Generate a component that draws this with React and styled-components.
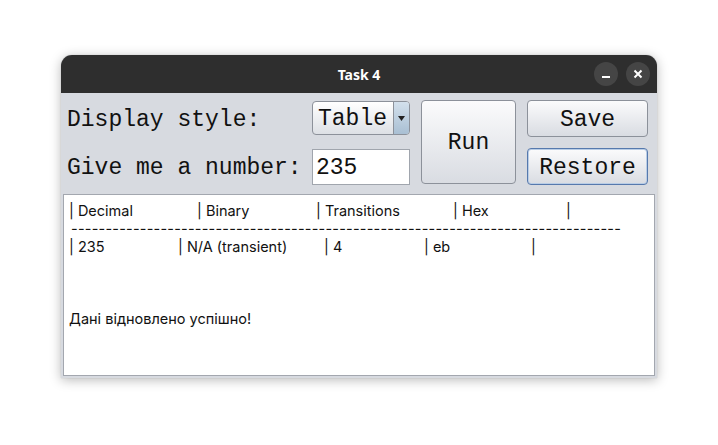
import React from 'react';
import styled, { createGlobalStyle } from 'styled-components';

const Global = createGlobalStyle`
  html, body { margin: 0; padding: 0; background: #ffffff; }
  body { width: 718px; height: 445px; overflow: hidden; }
`;

const Page = styled.div`
  padding: 55px 0 0 61px;
`;

const Window = styled.div`
  width: 596px;
  height: 323px;
  display: flex;
  flex-direction: column;
  background: #d7dae0;
  border-radius: 11px 11px 0 0;
  box-shadow: 0 2px 12px rgba(0, 0, 0, 0.28), 0 0 1px rgba(0, 0, 0, 0.3);
  overflow: hidden;
`;

const TitleBar = styled.div`
  height: 38px;
  flex: none;
  background: #2e2e2e;
  position: relative;
  display: flex;
  align-items: center;
  justify-content: center;
  color: #ffffff;
  font-family: "Noto Sans", "DejaVu Sans", sans-serif;
  font-weight: 700;
  font-size: 14px;
`;

const TitleButtons = styled.div`
  position: absolute;
  right: 7px;
  top: 7px;
  display: flex;
  gap: 8px;
`;

const RoundButton = styled.div`
  width: 24px;
  height: 24px;
  border-radius: 50%;
  background: #454545;
  display: flex;
  align-items: center;
  justify-content: center;
`;

const Controls = styled.div`
  display: grid;
  grid-template-columns: 234px 98px 95px 121px;
  grid-template-rows: 36px 36px;
  column-gap: 11px;
  row-gap: 12px;
  padding: 7px 0 0 6px;
  font-family: "Liberation Mono", "DejaVu Sans Mono", monospace;
  font-size: 23px;
  color: #111;
`;

const Label = styled.div`
  display: flex;
  align-items: center;
  white-space: nowrap;
  padding-top: ${p => p.$shift || 0}px;
`;

const Combo = styled.div`
  height: 34px;
  margin-top: 1px;
  box-sizing: border-box;
  border: 1px solid #8c919a;
  border-radius: 4px;
  display: flex;
  overflow: hidden;
  background: linear-gradient(#ffffff, #dde0e5);
`;

const ComboText = styled.div`
  flex: 1;
  display: flex;
  align-items: center;
  padding: 2px 0 0 5px;
`;

const ComboArrow = styled.div`
  width: 15px;
  border-left: 1px solid #8c919a;
  background: linear-gradient(#d3e0ec, #a9bfd3);
  display: flex;
  align-items: center;
  justify-content: center;
`;

const Field = styled.div`
  height: 36px;
  margin-top: 1px;
  box-sizing: border-box;
  border: 1px solid #a0a5ad;
  background: #ffffff;
  display: flex;
  align-items: center;
  padding: 2px 0 0 3px;
`;

const Button = styled.div`
  box-sizing: border-box;
  border: 1px solid ${p => (p.$focused ? '#5679ad' : '#8c919a')};
  border-radius: 4px;
  background: linear-gradient(#fbfbfc, #d9dce2);
  box-shadow: ${p => (p.$focused ? 'inset 0 0 0 1px #b9cde6' : 'none')};
  display: flex;
  align-items: center;
  justify-content: center;
  padding-top: 2px;
  grid-row: ${p => p.$row || 'auto'};
  grid-column: ${p => p.$col || 'auto'};
  height: ${p => p.$h || 'auto'};
`;

const TextArea = styled.div`
  margin: 10px 2px 2px 2px;
  flex: 1;
  background: #ffffff;
  border: 1px solid #a3a7af;
  padding: 7px 5px;
  font-family: Inter, "Noto Sans", sans-serif;
  font-size: 14.5px;
  color: #111;
  line-height: 18px;
`;

const Line = styled.div`
  display: flex;
  height: 18px;
  white-space: nowrap;
`;

const Cell = styled.span`
  width: ${p => p.$w}px;
  flex: none;
`;

const Dashes = styled.div`
  width: 550px;
  height: 18px;
  margin-left: 2px;
  display: flex;
  justify-content: space-between;
`;

const header = [['| Decimal', 128], ['| Binary', 119], ['| Transitions', 137], ['| Hex', 113], ['|', 10]];
const row = [['| 235', 109], ['| N/A (transient)', 146], ['| 4', 100], ['| eb', 107], ['|', 10]];
const dashes = Array.from({ length: 80 }, (_, i) => i);

export default function App() {
  return (
    <Page>
      <Global />
      <Window>
        <TitleBar>
          Task 4
          <TitleButtons>
            <RoundButton>
              <svg width="10" height="10" viewBox="0 0 10 10">
                <rect x="1" y="7" width="8" height="2" fill="#fff" />
              </svg>
            </RoundButton>
            <RoundButton>
              <svg width="10" height="10" viewBox="0 0 10 10">
                <path d="M1.5 1.5 L8.5 8.5 M8.5 1.5 L1.5 8.5" stroke="#fff" strokeWidth="2" />
              </svg>
            </RoundButton>
          </TitleButtons>
        </TitleBar>
        <Controls>
          <Label $shift={3}>Display style:</Label>
          <Combo>
            <ComboText>Table</ComboText>
            <ComboArrow>
              <svg width="7" height="5" viewBox="0 0 7 5">
                <path d="M0 0 L7 0 L3.5 5 Z" fill="#222" />
              </svg>
            </ComboArrow>
          </Combo>
          <Button $row="1 / 3" $col="3">Run</Button>
          <Button $h="37px">Save</Button>
          <Label $shift={4}>Give me a number:</Label>
          <Field>235</Field>
          <Button $col="4" $h="37px" $focused>Restore</Button>
        </Controls>
        <TextArea>
          <Line>
            {header.map(([t, w]) => (
              <Cell key={t} $w={w}>{t}</Cell>
            ))}
          </Line>
          <Dashes>
            {dashes.map(i => (
              <span key={i}>-</span>
            ))}
          </Dashes>
          <Line>
            {row.map(([t, w]) => (
              <Cell key={t} $w={w}>{t}</Cell>
            ))}
          </Line>
          <Line />
          <Line />
          <Line />
          <Line>Дані відновлено успішно!</Line>
        </TextArea>
      </Window>
    </Page>
  );
}
